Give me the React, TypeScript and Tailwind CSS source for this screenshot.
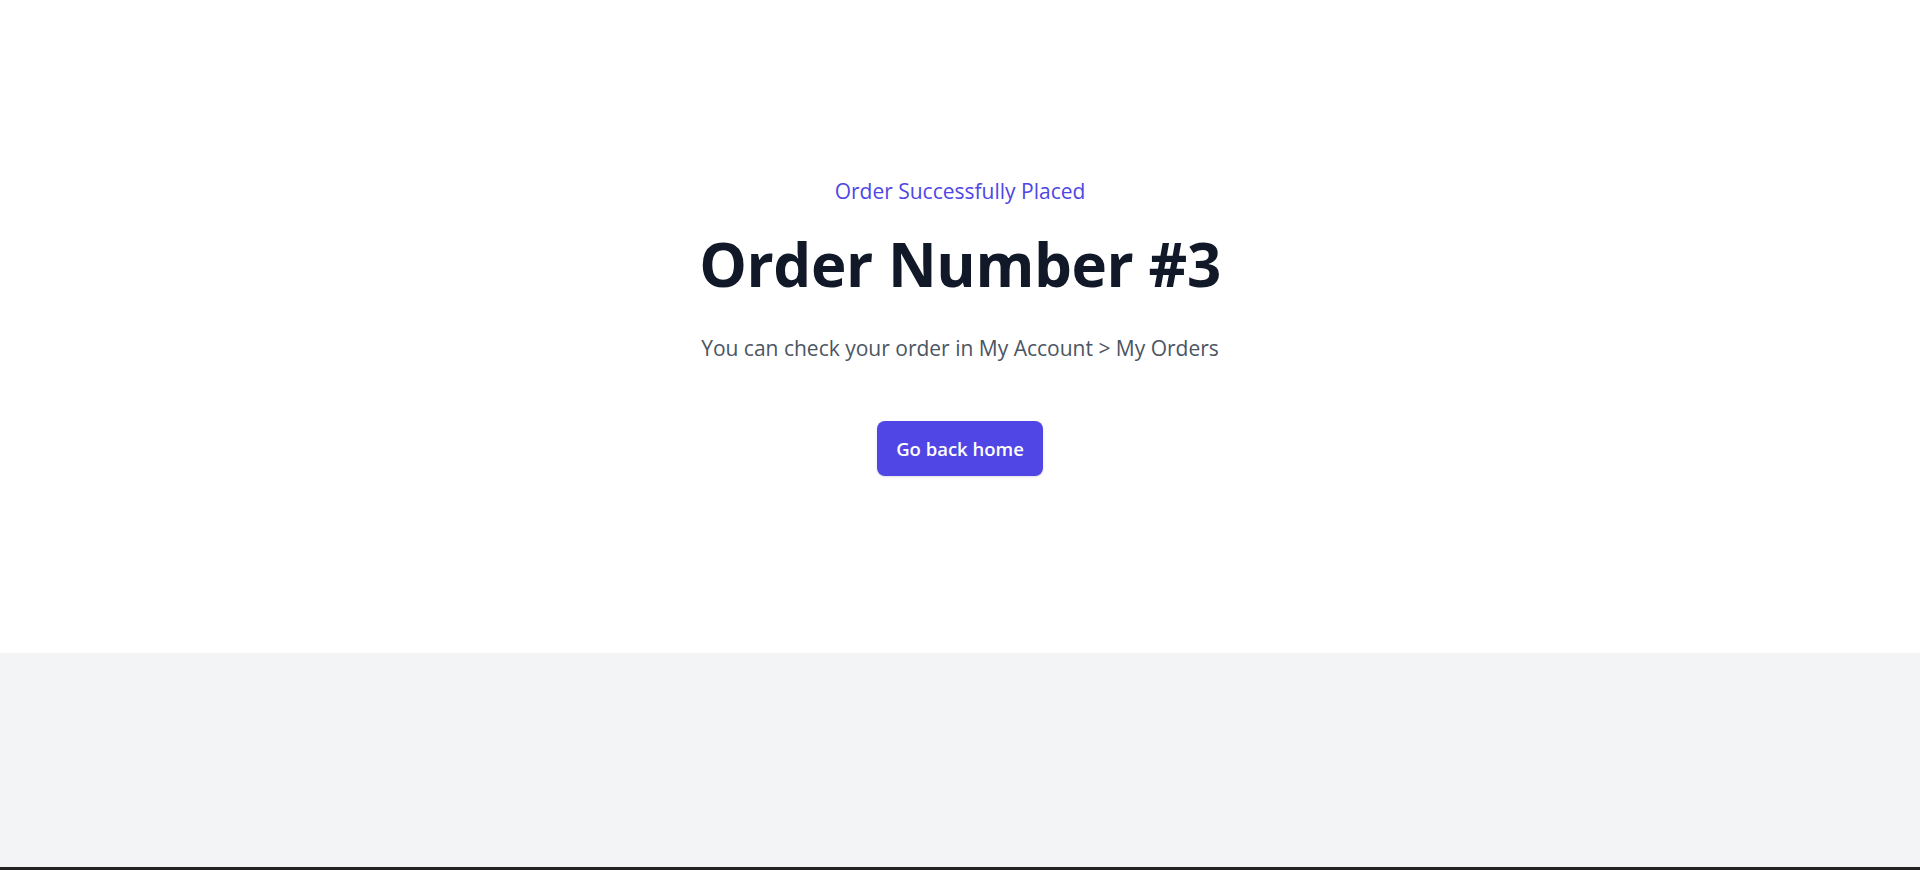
const App = () => {
  return (
    <div className="min-h-screen bg-[#f3f4f6]" style={{ fontFamily: '"Open Sans", "Noto Sans", sans-serif' }}>
      <main className="bg-white h-[653px] flex flex-col items-center pt-[177px] text-center">
        <p className="text-[21px] leading-[28px] font-medium text-[#4f46e5]">Order Successfully Placed</p>
        <h1 className="mt-[29px] text-[60px] leading-[60px] font-bold tracking-[-0.4px] text-[#111827]">Order Number #3</h1>
        <p className="mt-[38px] text-[21px] leading-[32px] text-[#4b5563]">You can check your order in My Account &gt; My Orders</p>
        <div className="mt-[57px] flex items-center justify-center">
          <a
            href="#"
            className="h-[55px] flex items-center rounded-[8px] bg-[#4f46e5] px-[19px] text-[18.5px] font-semibold text-white shadow-sm"
          >
            Go back home
          </a>
        </div>
      </main>
      <section className="h-[214px]" />
      <footer className="h-[3px] bg-[#222222]" />
    </div>
  );
};

export default App;
